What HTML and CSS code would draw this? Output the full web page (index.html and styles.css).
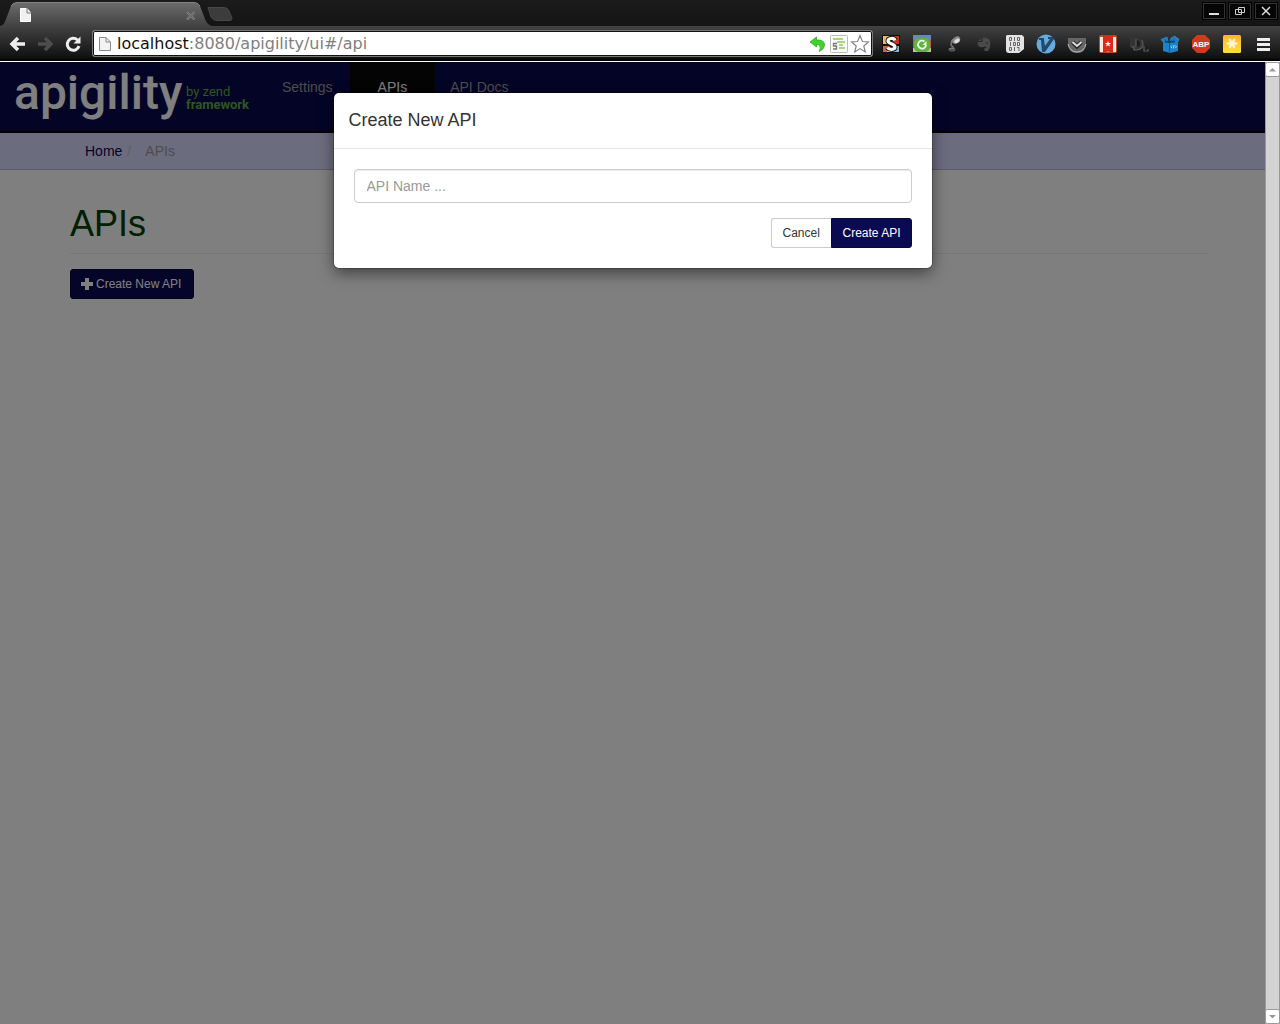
FILE: index.html
```html
<!DOCTYPE html>
<html lang="en">
<head>
<meta charset="utf-8">
<title>Apigility</title>
<link rel="stylesheet" href="styles.css">
</head>
<body>
<header class="browser">
  <div class="tabstrip">
    <svg class="tabs" width="240" height="26" viewBox="0 0 240 26" aria-hidden="true">
      <defs>
        <linearGradient id="tabfill" x1="0" y1="0" x2="0" y2="1"><stop offset="0" stop-color="#6c6c6c"/><stop offset="1" stop-color="#424242"/></linearGradient>
      </defs>
      <path d="M0 26C4 25 5 22 6 19L11 6Q13 2.500 17 2.500H194Q198 2.500 200 6L205 19C206 22 208 25 212 26Z" fill="url(#tabfill)"/>
      <path d="M11 6Q13 2.500 17 2.500H194Q198 2.500 200 6" fill="none" stroke="#858585"/>
      <path d="M208 7.500H224Q228 7.500 229 11L232 18Q232 20.500 230 20.500H217Q213 20.500 211 17Z" fill="#3c3c3c" stroke="#484848"/>
      <path d="M20.500 8.500H27L30.500 12.500V21.500H20.500Z" fill="#f1f1f1" stroke="#fff"/><path d="M27 8V13H31" fill="none" stroke="#777"/>
      <path d="M187 12L194.500 19.500M194.500 12L187 19.500" stroke="#858585" stroke-width="2.200"/><path d="M187 12L194.500 19.500M194.500 12L187 19.500" stroke="#555" stroke-width=".8"/>
    </svg>
    <div class="window-buttons">
      <button class="window-button" type="button" aria-label="Minimize"><svg width="20" height="14" viewBox="0 0 20 14"><path d="M5 10H15" stroke="#ddd" stroke-width="2"/></svg></button>
      <button class="window-button" type="button" aria-label="Restore"><svg width="20" height="14" viewBox="0 0 20 14"><path d="M8.500 3.500H14.500V8.500H8.500ZM5.500 5.500H11.500V10.500H5.500Z" fill="none" stroke="#ccc"/></svg></button>
      <button class="window-button" type="button" aria-label="Close"><svg width="20" height="14" viewBox="0 0 20 14"><path d="M6 3L14 11M14 3L6 11" stroke="#ddd" stroke-width="1.500"/></svg></button>
    </div>
  </div>
  <div class="toolbar">
    <div class="navigation">
      <button class="tool" type="button" aria-label="Back"><svg width="18" height="18" viewBox="0 0 18 18"><path d="M10 3L4 9L10 15M4 9H17" fill="none" stroke="#eee" stroke-width="3.500"/></svg></button>
      <button class="tool" type="button" aria-label="Forward"><svg width="18" height="18" viewBox="0 0 18 18"><path d="M9 3L15 9L9 15M15 9H2" fill="none" stroke="#4d4d4d" stroke-width="3.500"/></svg></button>
      <button class="tool" type="button" aria-label="Reload"><svg width="18" height="18" viewBox="0 0 18 18"><path d="M13.500 5A6 6 0 1 0 15 11" fill="none" stroke="#eee" stroke-width="3"/><path d="M16.500 1.500V8.500H9.500Z" fill="#eee"/></svg></button>
    </div>
    <div class="address">
      <svg width="12" height="16" viewBox="0 0 12 16" aria-hidden="true"><path d="M.5 1.500H7L11.500 6V14.500H.5Z" fill="#f3f3f3" stroke="#888"/><path d="M7 1.500V6H11.500" fill="none" stroke="#888"/></svg>
      <p class="url"><span class="host">localhost</span>:8080/apigility/ui#/api</p>
      <div class="address-icons">
        <svg width="20" height="20" viewBox="0 0 20 20" aria-hidden="true"><path d="M2 8L8.500 3V6Q16.500 5.500 16.500 11Q16 15.500 11 17.500Q13.500 13.500 11.500 11.500Q10.500 10.500 8.500 10.500V13Z" fill="#3fd526" stroke="#279a22" stroke-width=".7"/></svg>
        <svg width="20" height="20" viewBox="0 0 20 20" aria-hidden="true"><rect x="1.500" y="1.500" width="17" height="17" rx="1" fill="#fafafa" stroke="#bbb"/><path d="M4 5H14M8 8H16M10 11H14M10 14H16" stroke="#90c950" stroke-width="1.500"/><path d="M8 9.500H4.500V12H7.500V15H4" fill="none" stroke="#777" stroke-width="1.300"/></svg>
        <svg width="20" height="20" viewBox="0 0 20 20" aria-hidden="true"><path d="M10 1.500L12.400 7.500L18.500 8L13.800 12L15.300 18L10 14.600L4.700 18L6.200 12L1.500 8L7.600 7.500Z" fill="#fff" stroke="#858585" stroke-width="1.200"/></svg>
      </div>
    </div>
    <div class="extensions">
      <svg width="20" height="20" viewBox="0 0 20 20" aria-hidden="true"><path fill="#111" d="M1 1H19V19H1Z"/><path fill="#f0b76b" d="M2 2H9V10H2Z"/><path fill="#c83222" d="M11 2H18V10H11Z"/><path fill="#c46a4a" d="M2 12H9V18H2Z"/><path fill="#f1d222" d="M6 14H11V18H6Z"/><path fill="#80b4d2" d="M12 12H18V18H12Z"/><path d="M14 6.500C13 3.500 7 4 7 7C7 10 14 9.500 14 13C14 16 8 16 6.500 13.500" fill="none" stroke="#111" stroke-width="5"/><path d="M14 6.500C13 3.500 7 4 7 7C7 10 14 9.500 14 13C14 16 8 16 6.500 13.500" fill="none" stroke="#fff" stroke-width="3.200"/></svg>
      <svg width="20" height="20" viewBox="0 0 20 20" aria-hidden="true"><path fill="#6688bd" d="M1 1H19V6H1Z"/><path fill="#b85a50" d="M1 6H19V14H1Z"/><path fill="#c5c29b" d="M1 14H19V18H1Z"/><rect x="2" y="4" width="16" height="14" rx="5" fill="#5fb33e"/><path d="M12.500 7.500A4 4 0 1 0 14 11" fill="none" stroke="#eef9e8" stroke-width="1.800"/><path d="M14.500 7V11H10.500Z" fill="#eef9e8"/></svg>
      <svg width="20" height="20" viewBox="0 0 20 20" aria-hidden="true"><ellipse cx="13" cy="6" rx="4.500" ry="3" fill="#888" transform="rotate(-30 13 6)"/><ellipse cx="14" cy="7" rx="3" ry="2" fill="#ddd" transform="rotate(-30 14 7)"/><path d="M9 6L8 11L11 14" fill="none" stroke="#777" stroke-width="1.500"/><ellipse cx="9" cy="15.500" rx="3.500" ry="2" fill="#555"/><path d="M6 15Q8 13.500 11 14.500" fill="none" stroke="#888"/></svg>
      <svg width="20" height="20" viewBox="0 0 20 20" aria-hidden="true"><path d="M3.500 8L8 3.500Q15 3 16 7Q17 13 14 17H10.500V14H12.500L12 12.500Q6 14 4 12Z" fill="#4a4a4a"/><path d="M4 7.500H8V3.500M12 9H14" fill="none" stroke="#252525"/></svg>
      <svg width="20" height="20" viewBox="0 0 20 20" aria-hidden="true"><path d="M2 1H17L19 3V15L14 19H4Q1 19 1 16V2Z" fill="#e3e3e3"/><path d="M4.500 3.500H6.500V6.500H4.500ZM9.500 3V7M12.500 3.500H14.500V6.500H12.500ZM5.500 8V12M8.500 8.500H10.500V11.500H8.500ZM12.500 8.500H14.500V11.500H12.500ZM4.500 13.500H6.500V16.500H4.500ZM9.500 13V17M12 13.500H14V17" fill="none" stroke="#666"/></svg>
      <svg width="20" height="20" viewBox="0 0 20 20" aria-hidden="true"><circle cx="10" cy="10" r="9.500" fill="#66aade"/><path d="M3 4H8V6L9 12L14 5H12V3H18V5L9 18H6L5 6H3Z" fill="#24486a"/></svg>
      <svg width="20" height="20" viewBox="0 0 20 20" aria-hidden="true"><path d="M1 4H19V9Q19 19 10 19Q1 19 1 9Z" fill="#666"/><path d="M1 10Q3 18 10 18Q17 18 19 10" fill="none" stroke="#bbb"/><path d="M5.500 8L10 12.500L14.500 8" fill="none" stroke="#222" stroke-width="4"/><path d="M5.500 8L10 12L14.500 8" fill="none" stroke="#ddd" stroke-width="2"/></svg>
      <svg width="20" height="20" viewBox="0 0 20 20" aria-hidden="true"><rect x="1" y="1" width="18" height="18" rx="2" fill="#b9502d"/><path d="M2 3H18V18H2Z" fill="#f5e9df"/><path d="M5 1H15V19L10 17.500L5 19Z" fill="#d92b1c"/><path d="M10 7L10.800 9H13L11.200 10.400L12 12.500L10 11.200L8 12.500L8.800 10.400L7 9H9.200Z" fill="#fff"/></svg>
      <svg width="20" height="20" viewBox="0 0 20 20" aria-hidden="true"><path d="M1 3H8Q14 5 14 10Q13 16 7 16H4V13L1 13Z" fill="#343434"/><path d="M7 6V13H9Q11 12 11 9Q10 6 7 6Z" fill="#1c1c1c"/><path d="M2 13H5V16H8Q14 15 14 10L13 6M7 5V13M15 12V17H19V15" fill="none" stroke="#5b5b5b" stroke-width="1.200"/></svg>
      <svg width="20" height="20" viewBox="0 0 20 20" aria-hidden="true"><path d="M3 8L10 9L18 8V17L10 19L3 17Z" fill="#1b83ca"/><path d="M3 8L1 5.500L7 3L8 7ZM10 8L11 4L15 2L18 6V8ZM15 3L19 5L18 7" fill="#1b79b8" stroke="#2d96d8" stroke-width=".7"/><path d="M5 7.500H15" stroke="#064a7a" stroke-width="1.500"/><path d="M9.500 9V18.500" stroke="#0b5c94"/><path d="M12 11.500L10.800 12.800L12 14M15.300 11.500L16.500 12.800L15.300 14M14.200 11L13.200 14.500" fill="none" stroke="#d5ecf9" stroke-width=".8"/></svg>
      <svg class="badge-icon" width="20" height="20" viewBox="0 0 20 20" aria-hidden="true"><path d="M6 1H14L19 6V14L14 19H6L1 14V6Z" fill="#d23a20"/><text x="10" y="13" text-anchor="middle" fill="#fff">ABP</text></svg>
      <svg width="20" height="20" viewBox="0 0 20 20" aria-hidden="true"><defs><linearGradient id="note" x2="0" y2="1"><stop stop-color="#ffb62d"/><stop offset="1" stop-color="#ffe03d"/></linearGradient></defs><rect x="1" y="1" width="18" height="18" rx="1.500" fill="url(#note)"/><path d="M7.500 5L12.500 14M12.500 5L7.500 14M4.500 9.500H15.500" stroke="#fff4d0" stroke-width="2.500"/></svg>
      <svg width="20" height="20" viewBox="0 0 20 20" aria-hidden="true"><path d="M4 5.500H17M4 10.500H17M4 15.500H17" stroke="#eee" stroke-width="3.200"/></svg>
    </div>
  </div>
</header>
<div class="viewport">
  <div class="page">
    <nav class="navbar">
      <a class="brand" href="#"><span class="brand-name">apigility</span><span class="brand-by">by zend<b>framework</b></span></a>
      <a class="nav-link" href="#settings">Settings</a>
      <a class="nav-link active" href="#api">APIs</a>
      <a class="nav-link" href="#docs">API Docs</a>
    </nav>
    <div class="breadcrumb"><a href="#home">Home</a><span class="slash">/</span><span class="current">APIs</span></div>
    <main class="content">
      <h1>APIs</h1>
      <button class="button primary new-api" type="button"><svg width="12" height="12" viewBox="0 0 12 12" aria-hidden="true"><path d="M4 0H8V4H12V8H8V12H4V8H0V4H4Z" fill="#fff"/></svg>Create New API</button>
    </main>
    <div class="backdrop">
      <form class="modal" role="dialog" aria-labelledby="modal-title">
        <h2 id="modal-title">Create New API</h2>
        <div class="modal-body">
          <input class="field" type="text" placeholder="API Name ..." aria-label="API Name">
          <div class="actions"><button class="button cancel" type="button">Cancel</button><button class="button primary create" type="button">Create API</button></div>
        </div>
      </form>
    </div>
  </div>
  <div class="scrollbar" aria-hidden="true">
    <svg width="15" height="15" viewBox="0 0 15 15"><rect x=".5" y=".5" width="14" height="14" rx="2" fill="#fff" stroke="#999"/><path d="M4 9.500L7.500 6L11 9.500Z" fill="#999"/></svg>
    <svg width="15" height="15" viewBox="0 0 15 15"><rect x=".5" y=".5" width="14" height="14" rx="2" fill="#fff" stroke="#999"/><path d="M4 6L7.500 9.500L11 6Z" fill="#999"/></svg>
  </div>
</div>
</body>
</html>
```
FILE: styles.css
```css
* { box-sizing: border-box; }
body {
  margin: 0;
  min-height: 100vh;
  display: flex;
  flex-direction: column;
  font: 14px/20px "Liberation Sans", Arial, sans-serif;
  color: #333;
  background: #fff;
}
svg { display: block; flex: none; }
a { text-decoration: none; }
button { font: inherit; }

.browser { border-bottom: 1px solid #fff; }
.tabstrip {
  display: flex;
  justify-content: space-between;
  height: 26px;
  background: linear-gradient(#1b1b1b, #141414);
}
.window-buttons { display: flex; gap: 2px; padding: 2px 2px 0 0; }
.window-button {
  display: flex;
  align-items: center;
  justify-content: center;
  width: 24px;
  height: 18px;
  padding: 0;
  background: #050505;
  border: 1px solid #000;
  outline: 1px solid #333;
  outline-offset: -2px;
}
.toolbar {
  display: flex;
  align-items: center;
  height: 35px;
  padding: 0 7px 0 8px;
  background: linear-gradient(#424242, #111 90%, #000);
}
.navigation { display: flex; gap: 10px; width: 84px; }
.tool { padding: 0; border: 0; background: none; }
.address {
  display: flex;
  align-items: center;
  flex: 1;
  height: 27px;
  padding: 0 2px 0 6px;
  background: #fff;
  border: 1px solid #777;
  outline: 1px solid #111;
  outline-offset: -2px;
  border-radius: 3px;
}
.url {
  flex: 1;
  margin: 0 0 0 6px;
  font: 16px/20px "DejaVu Sans", sans-serif;
  color: #808080;
}
.host { color: #111; }
.address-icons { display: flex; gap: 1px; }
.extensions { display: flex; gap: 11px; padding-left: 8px; }
.badge-icon { font: bold 8px "Liberation Sans", sans-serif; }

.viewport { flex: 1; display: flex; }
.page { position: relative; flex: 1; }
.navbar {
  display: flex;
  height: 71px;
  background: #08084f;
  border-bottom: 2px solid #000;
}
.brand { display: flex; width: 267px; padding-left: 14px; gap: 4px; }
.brand-name {
  width: 168px;
  font: 500 48px/62px Roboto, sans-serif;
  color: #fff;
}
.brand-by {
  display: flex;
  flex-direction: column;
  padding-top: 23px;
  font: 13px/13px Roboto, sans-serif;
  color: #5daf36;
}
.nav-link { padding: 15px 15px 0; color: #999; }
.nav-link.active { margin-left: 2px; padding: 15px 28px 0; background: #080808; color: #fff; }
.breadcrumb {
  display: flex;
  height: 37px;
  padding: 8px 85px;
  background: #d9d9ff;
  border-bottom: 1px solid #b5b5e5;
}
.breadcrumb a { color: #08084f; }
.slash { width: 23px; padding-left: 5px; color: #bbb; }
.current { color: #999; }
.content { padding: 34px 57px 0 70px; }
h1 {
  margin: 0 0 15px;
  padding-bottom: 9px;
  border-bottom: 1px solid #eee;
  font-size: 36px;
  font-weight: 400;
  line-height: 40px;
  color: #004000;
}
.button {
  display: flex;
  align-items: center;
  gap: 3px;
  height: 30px;
  padding: 0 10px;
  border: 1px solid #ccc;
  border-radius: 3px;
  background: #fff;
  color: #333;
  font-size: 12px;
  line-height: 18px;
}
.primary { background: #0a0a52; border-color: #08083c; color: #fff; }
.new-api { min-width: 124px; }

.backdrop {
  position: absolute;
  inset: 0;
  padding-top: 31px;
  background: rgba(0, 0, 0, .5);
}
.modal {
  width: 598px;
  max-width: 100%;
  margin: 0 auto;
  background: #fff;
  border-radius: 5px;
  box-shadow: 0 0 0 1px rgba(0, 0, 0, .2), 0 5px 15px rgba(0, 0, 0, .5);
}
.modal h2 {
  margin: 0;
  padding: 15px 15px 16px;
  border-bottom: 1px solid #e5e5e5;
  font-size: 18px;
  font-weight: 400;
  line-height: 24px;
}
.modal-body { padding: 20px; }
.field {
  display: block;
  width: 100%;
  height: 34px;
  padding: 6px 12px;
  border: 1px solid #ccc;
  border-radius: 4px;
  font: inherit;
  box-shadow: inset 0 1px 1px rgba(0, 0, 0, .075);
}
.field::placeholder { color: #999; }
.actions { display: flex; justify-content: flex-end; margin-top: 15px; }
.cancel { min-width: 60px; border-right: 0; border-radius: 3px 0 0 3px; }
.create { border-radius: 0 3px 3px 0; }

.scrollbar {
  display: flex;
  flex-direction: column;
  justify-content: space-between;
  width: 15px;
  background: #d3d3d3;
  box-shadow: inset 1px 0 #999, inset -1px 0 #999;
}
```
